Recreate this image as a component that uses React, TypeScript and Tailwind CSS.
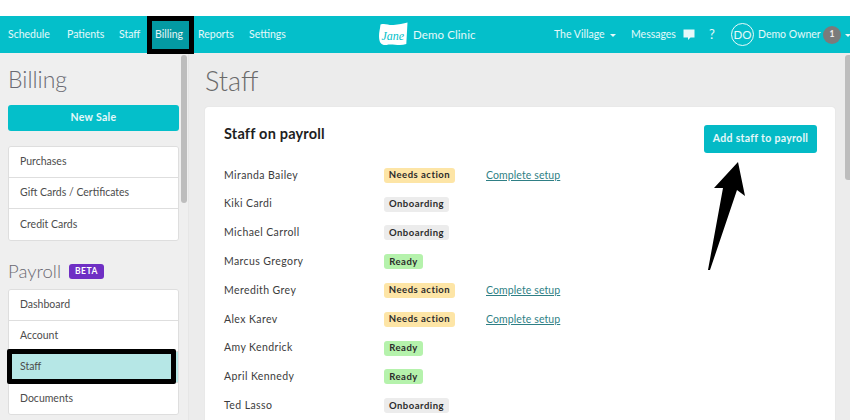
const font = { fontFamily: "Lato, sans-serif" };

type Status = "action" | "onboarding" | "ready";
const staff: [string, Status][] = [
  ["Miranda Bailey", "action"],
  ["Kiki Cardi", "onboarding"],
  ["Michael Carroll", "onboarding"],
  ["Marcus Gregory", "ready"],
  ["Meredith Grey", "action"],
  ["Alex Karev", "action"],
  ["Amy Kendrick", "ready"],
  ["April Kennedy", "ready"],
  ["Ted Lasso", "onboarding"],
];

function Badge({ status }: { status: Status }) {
  if (status === "action")
    return <span className="flex h-[15px] w-[71px] items-center justify-center rounded-[3px] bg-[#fde5a6] text-[9.5px] font-bold tracking-[0.5px] text-[#2b2b2b]">Needs action</span>;
  if (status === "onboarding")
    return <span className="flex h-[15px] w-[65px] items-center justify-center rounded-[3px] bg-[#ececec] text-[9.5px] font-bold tracking-[0.5px] text-[#2b2b2b]">Onboarding</span>;
  return <span className="flex h-[15px] w-[39px] items-center justify-center rounded-[3px] bg-[#b5f2ac] text-[9.5px] font-bold tracking-[0.5px] text-[#2b2b2b]">Ready</span>;
}

function Caret() {
  return <span className="mt-[1px] h-0 w-0 shrink-0 border-x-[3.5px] border-t-[3.5px] border-x-transparent border-t-white/90" />;
}

function SideItem({ label, active, last }: { label: string; active?: boolean; last?: boolean }) {
  return (
    <div className={`flex h-[31px] items-center pl-[11px] text-[10.5px] text-[#4c4c4c] ${last ? "" : "border-b border-[#dedede]"} ${active ? "bg-[#b6e7e6]" : "bg-white"}`}>
      {label}
    </div>
  );
}

export default function App() {
  return (
    <div style={font} className="relative flex h-[420px] w-[850px] flex-col overflow-hidden bg-white">
      <div className="h-[16px] shrink-0 bg-white" />
      <nav className="flex h-[37px] shrink-0 items-center overflow-hidden bg-[#04bfca] pl-[8px] text-[10.5px] whitespace-nowrap text-white/90">
        <a className="w-[59px] shrink-0">Schedule</a>
        <a className="w-[52px] shrink-0">Patients</a>
        <a className="w-[33px] shrink-0">Staff</a>
        <a className="flex h-[31px] w-[37px] shrink-0 items-center justify-center bg-[#039aa3] pr-[3px]">Billing</a>
        <a className="ml-[9px] w-[51px] shrink-0">Reports</a>
        <a className="w-[129px] shrink-0">Settings</a>
        <svg width="31" height="24" viewBox="0 0 30 24" className="mb-[1px] shrink-0">
          <path d="M2 2.500 C7 1 10 3.500 15 3 C20 2.500 25 1.500 29 0.500 L27.800 22 C22 24 15 22 10 22.500 C5 24 0.500 23 0.500 14 C0.500 10 1.500 7 2 2.500Z" fill="#fff" />
          <text x="3" y="18" fontSize="12" fontStyle="italic" fontFamily="Liberation Serif, serif" fill="#04bfca">Jane</text>
        </svg>
        <span className="ml-[4px] w-[141px] shrink-0 text-[11.5px] tracking-[0.1px]">Demo Clinic</span>
        <span className="w-[56px] shrink-0">The Village</span>
        <span className="flex w-[21px] shrink-0"><Caret /></span>
        <span className="w-[52px] shrink-0">Messages</span>
        <span className="w-[26px] shrink-0">
          <svg width="12" height="12" viewBox="0 0 12 12" className="block">
            <path d="M0.500 0.500H11.500V8.500H7.500L5 11V8.500H0.500Z" fill="#fff" fillOpacity="0.9" />
          </svg>
        </span>
        <span className="w-[22px] shrink-0 text-[13px]">?</span>
        <span className="flex h-[23px] w-[23px] shrink-0 items-center justify-center rounded-full border border-white/90 text-[11.5px]">DO</span>
        <span className="ml-[4px] w-[65px] shrink-0">Demo Owner</span>
        <span className="flex h-[18px] w-[18px] shrink-0 items-center justify-center rounded-full bg-[#7b7b7b] text-[8.5px] font-bold">1</span>
        <span className="ml-[4px] flex shrink-0"><Caret /></span>
      </nav>

      <div className="flex min-h-0 flex-1">
        <aside className="flex w-[189px] shrink-0 border-r border-[#e6e6e6] bg-[#efefef]">
          <div className="w-[179px] shrink-0 pl-[8px]">
            <h2 className="mt-[12px] text-[23px] leading-[28px] font-light text-[#6a6a72]">Billing</h2>
            <button className="mt-[12px] flex h-[26px] w-[171px] items-center justify-center rounded-[3px] bg-[#04bfca] text-[10.5px] font-bold tracking-[0.3px] text-white/90">New Sale</button>
            <div className="mt-[15px] w-[171px] overflow-hidden rounded-[3px] border border-[#dedede]">
              <SideItem label="Purchases" />
              <SideItem label="Gift Cards / Certificates" />
              <SideItem label="Credit Cards" last />
            </div>
            <div className="mt-[18px] flex items-center">
              <span className="text-[18.5px] leading-[24px] font-light text-[#6a6a72]">Payroll</span>
              <span className="ml-[8px] flex h-[15px] w-[35px] items-center justify-center rounded-[3px] bg-[#6f2fc4] text-[8.5px] font-bold tracking-[0.5px] text-white">BETA</span>
            </div>
            <div className="mt-[6px] w-[171px] overflow-hidden rounded-[3px] border border-[#dedede]">
              <SideItem label="Dashboard" />
              <SideItem label="Account" />
              <SideItem label="Staff" active />
              <SideItem label="Documents" last />
            </div>
          </div>
          <div className="mt-[2px] ml-[2px] h-[148px] w-[6px] rounded-[3px] bg-[#bdbdbd]" />
        </aside>

        <main className="flex min-w-0 flex-1 bg-[#ececec]">
          <div className="w-[646px] shrink-0 pl-[16px]">
            <h1 className="mt-[12px] text-[27px] leading-[32px] font-light text-[#6a6a6a]">Staff</h1>
            <section className="mt-[10px] h-[320px] w-[630px] rounded-t-[3px] bg-white pt-[18px] pl-[19px] shadow-[0_0_1px_rgba(0,0,0,0.15)]">
              <div className="flex items-start justify-between pr-[18px]">
                <h3 className="text-[14.500px] leading-[18px] font-bold tracking-[0.2px] text-[#1e1e1e]">Staff on payroll</h3>
                <button className="flex h-[28px] w-[113px] items-center justify-center rounded-[3px] bg-[#04bac6] text-[10.5px] font-bold tracking-[0.3px] text-white/90">Add staff to payroll</button>
              </div>
              <div className="mt-[8px]">
                {staff.map(([name, status]) => (
                  <div key={name} className="flex h-[28.8px] items-center text-[10.5px] tracking-[0.4px] text-[#3c3c3c]">
                    <span className="w-[160px]">{name}</span>
                    <span className="w-[102px]"><Badge status={status} /></span>
                    {status === "action" && <a className="text-[10.5px] tracking-[0.1px] text-[#2f7f85] underline">Complete setup</a>}
                  </div>
                ))}
              </div>
            </section>
          </div>
          <div className="mt-[2px] ml-auto h-[125px] w-[5px] rounded-l-[3px] bg-[#bdbdbd]" />
        </main>
      </div>

      {/* annotations drawn over the screenshot */}
      <div className="absolute top-[16px] left-[147px] h-[38px] w-[47px] border-[5px] border-black" />
      <div className="absolute top-[349px] left-[7px] h-[35px] w-[169px] rounded-[2px] border-[5px] border-black" />
      <svg className="absolute top-[160px] left-[700px]" width="50" height="115" viewBox="0 0 50 115">
        <path d="M38 2 L45 36 L37 30 L10 110 L8 110 L23 28 L14 28 Z" fill="#000" />
      </svg>
    </div>
  );
}
